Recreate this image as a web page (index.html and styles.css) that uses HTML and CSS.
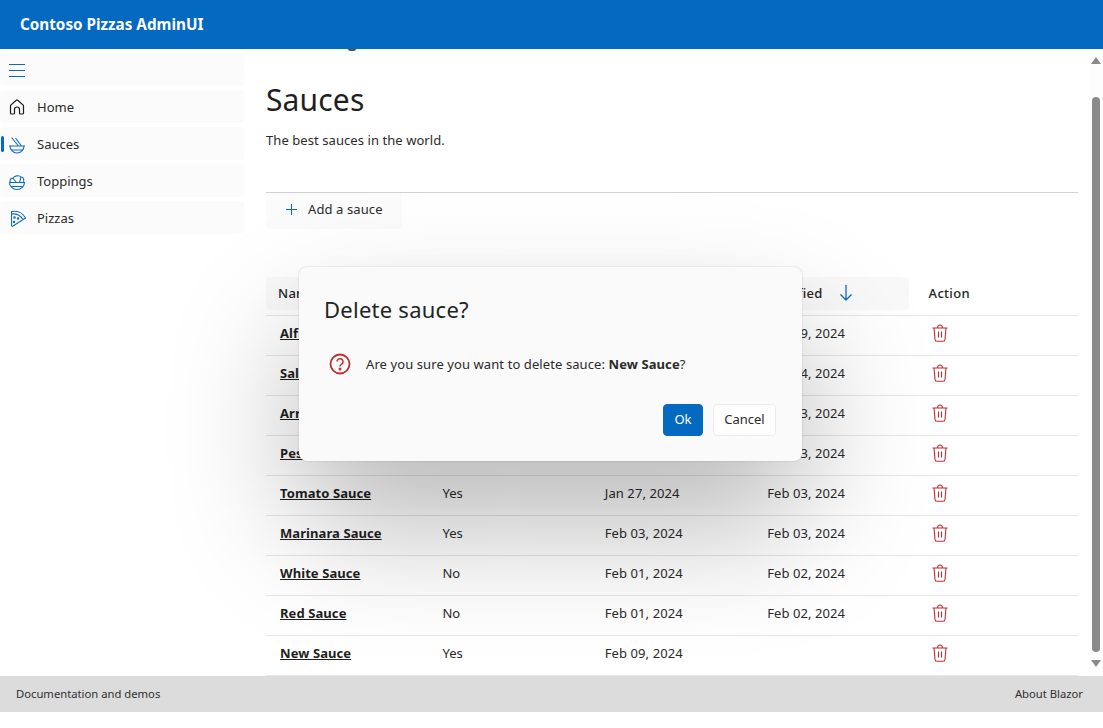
FILE: index.html
```html
<!DOCTYPE html>
<html lang="en">
<head>
<meta charset="utf-8">
<title>Contoso Pizzas AdminUI</title>
<link rel="stylesheet" href="styles.css">
</head>
<body>
<div class="app">
  <header class="topbar">Contoso Pizzas AdminUI</header>
  <div class="middle">
    <nav class="nav">
      <div class="nav-item nav-toggle">
        <svg class="ico" viewBox="0 0 18 18" fill="none" stroke="#0f6cbd" stroke-width="1"><path d="M1 3.500h16M1 9.500h16M1 15.500h16"/></svg>
      </div>
      <a class="nav-item">
        <svg class="ico" viewBox="0 0 18 18" fill="none" stroke="#1a1a1a" stroke-width="1.200"><path d="M3.500 16h2a1 1 0 0 0 1-1v-3.500a2.500 2.500 0 0 1 5 0V15a1 1 0 0 0 1 1h2a1 1 0 0 0 1-1V7.800a1 1 0 0 0-.3-.7L9.700 2.200a1 1 0 0 0-1.400 0L2.800 7.100a1 1 0 0 0-.3.700V15a1 1 0 0 0 1 1z"/></svg>
        <span>Home</span>
      </a>
      <a class="nav-item active">
        <span class="marker"></span>
        <svg class="ico" viewBox="0 0 18 18" fill="none" stroke="#0f6cbd" stroke-width="1.100"><path d="M1 11h16M2 11a7 7 0 0 0 14 0M3 15h12M3.500 2.500l7 8.500M7.500 3l6 8"/></svg>
        <span>Sauces</span>
      </a>
      <a class="nav-item">
        <svg class="ico" viewBox="0 0 18 18" fill="none" stroke="#0f6cbd" stroke-width="1.100"><path d="M1 10.500h16M1.500 10.500a7.500 7 0 0 0 15 0M3 14.500h12M2.500 10.500c-1.500-2.500.5-4.500 2.500-4 .5-2.500 6-4 8-1.500 2-.5 3.500 2.500 2.500 5.500M5 6.500l3.500 4M13 5 11.500 10.500"/></svg>
        <span>Toppings</span>
      </a>
      <a class="nav-item">
        <svg class="ico" viewBox="0 0 18 18" fill="none" stroke="#0f6cbd" stroke-width="1.100"><path d="M3.500 2.500c6-1 11.500 1.500 14 6.500L5 17c-1 .6-1.500 0-1.500-1zM3.500 5c5-.5 9 1.500 11.500 5.500" stroke-linejoin="round"/><circle cx="6.500" cy="8.500" r=".8"/><circle cx="10" cy="9.500" r=".7"/><circle cx="6" cy="13" r=".7"/></svg>
        <span>Pizzas</span>
      </a>
    </nav>
    <main class="main">
      <div class="content">
        <div class="scroll-trace"></div>
        <h1 class="title">Sauces</h1>
        <p class="lead">The best sauces in the world.</p>
        <div class="toolbar">
          <button class="add"><svg class="plus" viewBox="0 0 11 11" fill="none" stroke="#0f6cbd" stroke-width="1.100"><path d="M5.500 0v11M0 5.500h11"/></svg>Add a sauce</button>
        </div>
        <div class="grid">
          <div class="row head">
            <div class="th"><span>Name</span></div>
            <div class="th"><span>Vegan</span></div>
            <div class="th"><span>Created</span></div>
            <div class="th modified"><span>Modified</span><svg class="arrow" viewBox="0 0 14 18" fill="none" stroke="#0f6cbd" stroke-width="1.300"><path d="M7 1v15M1.500 10.500 7 16l5.500-5.500"/></svg></div>
            <div class="th action">Action</div>
          </div>
          <div class="row"><a class="name">Alfredo Sauce</a><span>Yes</span><span>Feb 01, 2024</span><span>Feb 09, 2024</span><svg class="trash"><use href="#t"/></svg></div>
          <div class="row"><a class="name">Salsa Sauce</a><span>Yes</span><span>Feb 01, 2024</span><span>Feb 04, 2024</span><svg class="trash"><use href="#t"/></svg></div>
          <div class="row"><a class="name">Arrabbiata</a><span>Yes</span><span>Feb 01, 2024</span><span>Feb 03, 2024</span><svg class="trash"><use href="#t"/></svg></div>
          <div class="row"><a class="name">Pesto Sauce</a><span>Yes</span><span>Feb 01, 2024</span><span>Feb 03, 2024</span><svg class="trash"><use href="#t"/></svg></div>
          <div class="row"><a class="name">Tomato Sauce</a><span>Yes</span><span>Jan 27, 2024</span><span>Feb 03, 2024</span><svg class="trash"><use href="#t"/></svg></div>
          <div class="row"><a class="name">Marinara Sauce</a><span>Yes</span><span>Feb 03, 2024</span><span>Feb 03, 2024</span><svg class="trash"><use href="#t"/></svg></div>
          <div class="row"><a class="name">White Sauce</a><span>No</span><span>Feb 01, 2024</span><span>Feb 02, 2024</span><svg class="trash"><use href="#t"/></svg></div>
          <div class="row"><a class="name">Red Sauce</a><span>No</span><span>Feb 01, 2024</span><span>Feb 02, 2024</span><svg class="trash"><use href="#t"/></svg></div>
          <div class="row"><a class="name">New Sauce</a><span>Yes</span><span>Feb 09, 2024</span><span></span><svg class="trash"><use href="#t"/></svg></div>
        </div>
      </div>
      <div class="scrollbar">
        <span class="tri up"></span>
        <span class="thumb"></span>
        <span class="tri down"></span>
      </div>
    </main>
  </div>
  <footer class="footer"><span>Documentation and demos</span><span>About Blazor</span></footer>
</div>
<div class="dialog">
  <h2 class="dlg-title">Delete sauce?</h2>
  <div class="dlg-body">
    <svg class="dlg-ico" viewBox="0 0 22 22" fill="none" stroke="#bc2f32" stroke-width="1.800"><circle cx="11" cy="11" r="9.500"/><path d="M8 8.600a3 3 0 1 1 4.700 2.500c-1.100.7-1.700 1.200-1.700 2.300" stroke-width="1.500"/><circle cx="11" cy="16" r=".6"/></svg>
    <p>Are you sure you want to delete sauce: <b>New Sauce</b>?</p>
  </div>
  <div class="dlg-actions">
    <button class="btn primary">Ok</button>
    <button class="btn">Cancel</button>
  </div>
</div>
<svg class="defs" width="0" height="0"><symbol id="t" viewBox="0 0 16 18"><path d="M.5 4h15M2 4l1 11.500A2 2 0 0 0 5 17.300h6a2 2 0 0 0 2-1.800L14 4M5.500 4c0-4 5-4 5 0M6.500 7.500v6M9.500 7.500v6" fill="none" stroke="#bc2f32" stroke-width="1.100"/></symbol></svg>
</body>
</html>
```
FILE: styles.css
```css
* { box-sizing: border-box; }
html, body { margin: 0; height: 100%; overflow: hidden; }
body { font-family: "Noto Sans", "Open Sans", sans-serif; font-size: 13px; color: #2b2b2b; background: #fff; position: relative; }
.app { display: flex; flex-direction: column; height: 712px; }
.topbar { height: 49px; flex: none; background: #0469c1; color: #fff; font-weight: 700; font-size: 15.25px; line-height: 49px; padding-left: 20px; }
.middle { display: flex; flex: 1; min-height: 0; }
.nav { width: 244px; flex: none; padding-top: 4px; display: flex; flex-direction: column; gap: 4px; }
.nav-item { height: 33px; background: #fbfbfb; border-radius: 4px; display: flex; align-items: center; gap: 11px; padding-left: 8px; position: relative; color: #2b2b2b; }
.ico { width: 18px; height: 18px; flex: none; overflow: visible; }
.marker { position: absolute; left: 1px; top: 9px; width: 3px; height: 16px; background: #0469c1; border-radius: 2px; }
.main { flex: 1; display: flex; min-width: 0; overflow: hidden; }
.content { flex: 1; min-width: 0; padding: 0 11px 0 22px; overflow: hidden; }
.scroll-trace { width: 8px; height: 2px; margin-left: 82px; background: #555; border-radius: 0 0 4px 4px; }
.title { margin: 29px 0 0; font-size: 30px; font-weight: 400; line-height: 40px; color: #1f1f1f; letter-spacing: .15px; }
.lead { margin: 10px 0 0; line-height: 20px; letter-spacing: .07px; }
.toolbar { margin-top: 42px; border-top: 1px solid #d1d1d1; }
.add { height: 36px; width: 136px; border: 0; background: #fbfbfb; font: inherit; color: #2b2b2b; display: flex; align-items: center; gap: 11px; padding: 0 0 4px 20px; border-radius: 0 0 4px 4px; letter-spacing: .1px; }
.plus { width: 11px; height: 11px; }
.grid { margin-top: 49px; }
.row { display: grid; grid-template-columns: repeat(5, 1fr); height: 40px; align-items: center; border-bottom: 1px solid #e6e6e6; padding-bottom: 6px; letter-spacing: .08px; }
.row > * { padding-left: 14px; }
.row > .trash { padding: 0; margin-left: 16px; width: 16px; height: 18px; }
.name { font-weight: 700; color: #1f1f1f; text-decoration: underline; }
.head { height: 38px; padding-bottom: 0; align-items: start; }
.row > .th { padding-left: 12px; }
.th { background: #f9f9f9; border-radius: 4px; display: flex; align-items: center; font-weight: 500; margin-right: 7px; height: 33px; margin-top: -1px; padding-bottom: 1px; letter-spacing: .3px; color: #242424; }
.row > .modified { padding-left: 12px; }
.row > .action { background: none; padding-left: 13px; }
.arrow { width: 14px; height: 18px; margin-left: 16px; flex: none; }
.scrollbar { width: 14px; flex: none; display: flex; flex-direction: column; align-items: center; background: #fdfdfd; padding-top: 8px; }
.tri { width: 0; height: 0; border-left: 5px solid transparent; border-right: 5px solid transparent; flex: none; }
.up { border-bottom: 7px solid #8a8a8a; }
.down { border-top: 7px solid #8a8a8a; margin-top: 8px; }
.thumb { width: 8px; height: 555px; margin-top: 33px; background: #8a8a8a; border-radius: 4px; flex: none; }
.footer { height: 36px; flex: none; background: #dcdcdc; display: flex; justify-content: space-between; align-items: center; padding: 0 20px 1px 16px; font-size: 11.25px; color: #303030; }
.dialog { position: absolute; left: 299px; top: 267px; width: 503px; height: 194px; background: #fafafa; border-radius: 8px; padding: 26px 26px 0 25px; box-shadow: 0 0 2px rgba(0,0,0,.2), 0 64px 128px rgba(0,0,0,.28); }
.dlg-title { margin: 0; font-size: 22px; font-weight: 400; line-height: 32px; color: #242424; letter-spacing: .25px; }
.dlg-body { display: flex; align-items: center; gap: 15px; margin-top: 27px; padding-left: 5px; height: 24px; }
.dlg-body p { margin: 0; color: #2b2b2b; letter-spacing: .09px; }
.dlg-ico { width: 22px; height: 22px; flex: none; }
.dlg-actions { display: flex; justify-content: flex-end; gap: 10px; margin-top: 28px; }
.btn { height: 32px; min-width: 63px; border: 1px solid #ececec; border-radius: 4px; background: #fff; font: inherit; color: #2b2b2b; padding: 0 0 2px; }
.primary { min-width: 40px; background: #0469c1; border-color: #0469c1; color: #fff; }
.defs { position: absolute; }
```
